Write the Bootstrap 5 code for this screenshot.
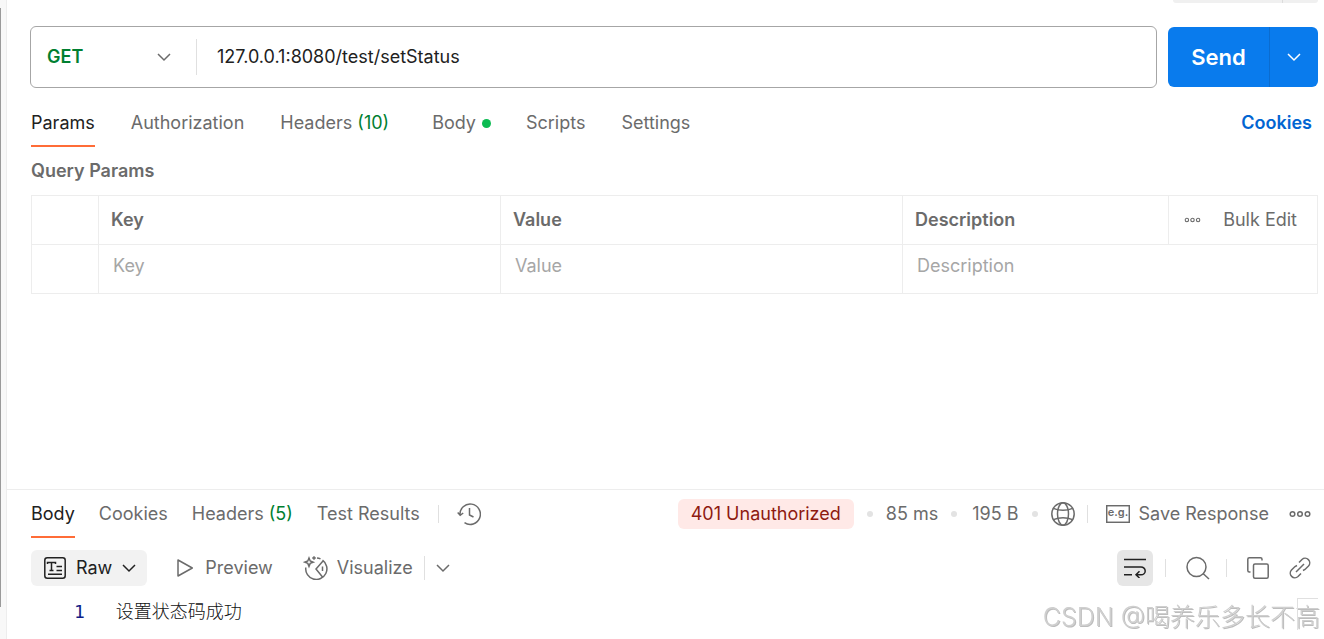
<!DOCTYPE html>
<html lang="en">
<head>
<meta charset="utf-8">
<meta name="viewport" content="width=device-width, initial-scale=1">
<title>127.0.0.1:8080/test/setStatus</title>
<link href="https://cdn.jsdelivr.net/npm/bootstrap@5.3.0/dist/css/bootstrap.min.css" rel="stylesheet">
<script src="https://cdn.jsdelivr.net/npm/bootstrap@5.3.0/dist/js/bootstrap.bundle.min.js" defer></script>
<style>
  :root { --ink: #212121; --muted: #6b6b6b; --faint: #a6a6a6; --line: #ededed; --green: #007f31; --accent: #ff6c37; }
  body { font-family: Inter, "Noto Sans CJK SC", sans-serif; font-size: 18px; line-height: 24px; color: var(--muted); background: #fff; }
  svg { display: block; flex: none; fill: none; stroke: currentColor; stroke-width: 1.5; }
  button { background: none; border: 0; padding: 0; color: inherit; }
  .rail { width: 7px; padding: 8px 0 32px; background: #f8f8f8; border-right: 1px solid var(--line); }
  .rail-mark { width: 1px; background: #9a9a9a; }
  .pane { min-width: 0; }
  .request { padding: 0 6px 0 24px; }
  .topstub { height: 3px; width: 145px; background: #f0f0f0; border-radius: 0 0 5px 5px; }
  .topstub span { width: 36px; border-left: 1px solid #dcdcdc; }
  .urlrow { gap: 11px; margin: 23px 0 0 -1px; }
  .urlbox { height: 62px; border: 1px solid #a6a6a6; border-radius: 6px; }
  .method { width: 166px; height: 36px; padding: 0 25px 0 16px; border-right: 1px solid #e0e0e0; }
  .method select { appearance: none; border: 0; background: none; padding: 0; outline: 0; color: var(--green); font-weight: 600; width: 100%; }
  .urlbox input { border: 0; outline: 0; padding: 0 20px; min-width: 0; color: var(--ink); }
  .send { height: 60px; background: #097bed; color: #fff; border-radius: 6px; }
  .send-main { width: 101px; font-size: 22px; font-weight: 600; }
  .send-more { width: 49px; border-left: 1px solid #0a6cd0; }
  .tabs a { color: inherit; text-decoration: none; border-bottom: 2px solid transparent; white-space: pre; }
  .tabs a.active { color: var(--ink); border-color: var(--accent); }
  .tabs-req { gap: 36px; margin-top: 23px; }
  .tabs-req a { padding-bottom: 10px; }
  .tabs-req .body-tab { margin-left: 7px; margin-right: -1px; }
  .tabs-res { gap: 24px; }
  .tabs-res a { padding: 12px 0 10px; }
  .count { color: var(--green); }
  .livedot { width: 9px; height: 9px; border-radius: 50%; background: #0cbb52; margin-left: 6px; }
  .cookielink { color: #0265d2; font-weight: 600; text-decoration: none; margin-right: 6px; }
  .heading { font-size: 18px; line-height: 24px; font-weight: 600; margin: 12px 0; }
  .params { table-layout: fixed; width: 100%; border-collapse: collapse; }
  .params .c-check { width: 67px; }
  .params .c-desc { width: 266px; }
  .params .c-tools { width: 149px; }
  .params th, .params td { border: 1px solid var(--line); height: 49px; padding: 0 12px; font-weight: 600; }
  .params td { padding: 0 14px 6px; }
  .params input { border: 0; outline: 0; padding: 0; width: 100%; display: block; }
  .params input::placeholder { color: var(--faint); opacity: 1; }
  .params .tools { padding: 0 20px 0 15px; font-weight: 400; }
  .response { border-top: 1px solid var(--line); height: 150px; }
  .resrow { padding: 0 13px 0 24px; height: 48px; }
  .toolrow { padding: 0 13px 0 24px; height: 36px; margin-top: 12px; }
  .vsep { width: 1px; height: 18px; background: #e0e0e0; }
  .tabs + .vsep { margin: 0 18px; }
  .status { height: 30px; padding: 0 13px; border-radius: 6px; background: #ffe9e7; color: #8e1a10; }
  .sepdot { width: 6px; height: 6px; border-radius: 50%; background: #e3e3e3; margin: 0 13px; }
  .sepdot.wide { margin: 0 15px 0 13px; }
  .save { gap: 9px; margin-left: 18px; }
  .rawbtn { height: 36px; padding: 0 11px 0 13px; gap: 10px; background: #f2f2f2; color: var(--ink); border-radius: 6px; }
  .previewbtn { gap: 12px; margin-left: 30px; }
  .visualbtn { gap: 9px; margin-left: 30px; }
  .visualbtn + .vsep { height: 24px; margin: 0 11px; }
  .wrapbtn { width: 36px; height: 36px; background: #e6e6e6; color: var(--ink); border-radius: 6px; }
  .codeline { padding: 14px 0 0 67px; gap: 31px; }
  .lineno { font-family: "DejaVu Sans Mono", monospace; color: #0f1d87; }
  .codetext { font-weight: 300; color: #111; }
  .watermark { right: 4px; bottom: 4px; font-size: 25px; line-height: 36px; font-weight: 300; color: #cfcfcf; text-shadow: 1px 1px 0 #bdbdbd; white-space: nowrap; pointer-events: none; }
  .watermark-corner { right: 6px; bottom: 9px; width: 21px; height: 32px; border: solid #e0e0e0; border-width: 1px 0 0 1px; pointer-events: none; }
</style>
</head>
<body>
<svg width="0" height="0" class="position-absolute" aria-hidden="true">
  <symbol id="chev" viewBox="0 0 14 14"><path d="M1 4l6 6 6-6"/></symbol>
  <symbol id="dots" viewBox="0 0 22 8"><circle cx="3.5" cy="4" r="2.3"/><circle cx="11" cy="4" r="2.3"/><circle cx="18.5" cy="4" r="2.3"/></symbol>
</svg>
<div class="d-flex vh-100 overflow-hidden">
  <div class="rail flex-shrink-0 d-flex"><div class="rail-mark"></div></div>
  <main class="pane flex-grow-1 d-flex flex-column">
    <section class="request flex-grow-1">
      <div class="topstub ms-auto d-flex justify-content-end"><span></span></div>
      <form class="urlrow d-flex align-items-center" onsubmit="return false">
        <div class="urlbox d-flex align-items-center flex-grow-1">
          <div class="method d-flex align-items-center">
            <select aria-label="Method"><option>GET</option><option>POST</option></select>
            <svg width="14" height="14"><use href="#chev"/></svg>
          </div>
          <input class="flex-grow-1" type="text" aria-label="Request URL" value="127.0.0.1:8080/test/setStatus">
        </div>
        <div class="send d-flex">
          <button type="submit" class="send-main">Send</button>
          <button type="button" class="send-more d-flex align-items-center justify-content-center" aria-label="Send options"><svg width="14" height="14"><use href="#chev"/></svg></button>
        </div>
      </form>
      <div class="d-flex justify-content-between">
        <nav class="tabs tabs-req d-flex" aria-label="Request">
          <a href="#" class="active">Params</a>
          <a href="#">Authorization</a>
          <a href="#">Headers <span class="count">(10)</span></a>
          <a href="#" class="body-tab d-flex align-items-center">Body<span class="livedot"></span></a>
          <a href="#">Scripts</a>
          <a href="#">Settings</a>
        </nav>
        <div class="tabs-req d-flex"><a href="#" class="cookielink">Cookies</a></div>
      </div>
      <h2 class="heading">Query Params</h2>
      <table class="params">
        <colgroup><col class="c-check"><col><col><col class="c-desc"><col class="c-tools"></colgroup>
        <thead>
          <tr>
            <th aria-label="Enabled"></th><th>Key</th><th>Value</th><th>Description</th>
            <th class="tools">
              <div class="d-flex align-items-center justify-content-between">
                <button type="button" aria-label="More"><svg width="17" height="6" viewBox="0 0 22 8"><use href="#dots"/></svg></button>
                <button type="button">Bulk Edit</button>
              </div>
            </th>
          </tr>
        </thead>
        <tbody>
          <tr>
            <td></td>
            <td><input type="text" placeholder="Key" aria-label="Key"></td>
            <td><input type="text" placeholder="Value" aria-label="Value"></td>
            <td colspan="2"><input type="text" placeholder="Description" aria-label="Description"></td>
          </tr>
        </tbody>
      </table>
    </section>

    <section class="response flex-shrink-0">
      <div class="resrow d-flex align-items-center justify-content-between">
        <div class="d-flex align-items-center">
          <nav class="tabs tabs-res d-flex" aria-label="Response">
            <a href="#" class="active">Body</a>
            <a href="#">Cookies</a>
            <a href="#">Headers <span class="count">(5)</span></a>
            <a href="#">Test Results</a>
          </nav>
          <span class="vsep"></span>
          <button type="button" aria-label="History">
            <svg width="24" height="24" viewBox="0 0 24 24"><path d="M3 13A10.2 10.2 0 1 1 7.5 20.7M.7 10.5L3.2 13.300l3-2.300M12.500 6v7l4 2"/></svg>
          </button>
        </div>
        <div class="d-flex align-items-center">
          <span class="status d-flex align-items-center">401 Unauthorized</span>
          <span class="sepdot"></span>
          <span>85 ms</span>
          <span class="sepdot wide"></span>
          <span>195 B</span>
          <span class="sepdot"></span>
          <button type="button" aria-label="Network" class="me-2"><svg width="24" height="24" viewBox="0 0 24 24"><circle cx="12" cy="12" r="11.200"/><ellipse cx="12" cy="12" rx="5.500" ry="11.200"/><path d="M2.500 6.300C8 9 16 9 21.500 6.300M2.500 17.700C8 15 16 15 21.500 17.700"/></svg></button>
          <span class="vsep ms-1"></span>
          <button type="button" class="save d-flex align-items-center">
            <svg width="24" height="18" viewBox="0 0 24 18"><rect x=".7" y=".7" width="22.600" height="16.600"/><text x="12" y="11" text-anchor="middle" font-size="11" font-weight="600" fill="currentColor" stroke="none">e.g.</text></svg>
            Save Response
          </button>
          <button type="button" aria-label="More actions" class="ps-3 ms-1"><svg width="22" height="8"><use href="#dots"/></svg></button>
        </div>
      </div>

      <div class="toolrow d-flex align-items-center justify-content-between">
        <div class="d-flex align-items-center">
          <button type="button" class="rawbtn d-flex align-items-center">
            <svg width="22" height="22" viewBox="0 0 22 22"><rect x=".8" y=".8" width="20.400" height="20.400" rx="2.500"/><path d="M3.500 7V5.500h8V7M7.500 5.500v8M5.500 13.500h4M12.500 9.500H18M12.500 13.500H18M4 17.200h14"/></svg>
            Raw
            <svg width="14" height="14"><use href="#chev"/></svg>
          </button>
          <button type="button" class="previewbtn d-flex align-items-center">
            <svg width="16" height="18" viewBox="0 0 16 18"><path d="M1 1l14.300 8L1 17z" stroke-linejoin="round"/></svg>
            Preview
          </button>
          <button type="button" class="visualbtn d-flex align-items-center">
            <svg width="25" height="24" viewBox="0 0 24 24"><path d="M13.500 1.900a10.600 10.600 0 0 1 3.500 1M19 4.200A10.600 10.600 0 1 1 2.300 11.500M5.500 2l1.200 3 3 1.200-3 1.200-1.200 3-1.200-3-3-1.200 3-1.200zM10.500.2v3.600M8.700 2h3.600M19.500 5L12.500 13l6.500 8M19 10.500v4.500"/></svg>
            Visualize
          </button>
          <span class="vsep"></span>
          <button type="button" aria-label="Visualize options"><svg width="14" height="14"><use href="#chev"/></svg></button>
        </div>
        <div class="d-flex align-items-center">
          <button type="button" class="wrapbtn d-flex align-items-center justify-content-center me-2" aria-label="Wrap lines">
            <svg width="22" height="20" viewBox="0 0 22 20"><path d="M0 1.500h22M0 9h17a4.200 3.900 0 0 1 0 7.800h-5M0 16.800h8M15.500 13.300L12 16.800l3.500 3.200"/></svg>
          </button>
          <span class="vsep ms-1 me-3"></span>
          <button type="button" aria-label="Search" class="ps-1 pe-3"><svg width="24" height="24" viewBox="0 0 24 24"><circle cx="10.500" cy="11" r="9.500"/><path d="M17 17.500l6 5.500"/></svg></button>
          <span class="vsep me-3"></span>
          <button type="button" aria-label="Copy" class="ps-1 pe-1"><svg width="22" height="22" viewBox="0 0 22 22"><rect x="6.500" y="7" width="14.700" height="14.200" rx="1.500"/><path d="M3.500 15H2.300Q.8 15 .8 13.500V2.300Q.8.8 2.300.8H13.500Q15 .8 15 2.300V3.500"/></svg></button>
          <button type="button" aria-label="Copy link" class="ms-3"><svg width="22" height="22" viewBox="0 0 22 22"><path d="M7 15l8-8M10 5.500l3-3a4.600 4.600 0 0 1 6.500 6.500l-3.500 3.500-2 1M12 16.500l-3 3A4.600 4.600 0 0 1 2.500 13L6 9.500l2-1"/></svg></button>
        </div>
      </div>

      <div class="codeline d-flex">
        <span class="lineno">1</span><span class="codetext" lang="zh-CN">设置状态码成功</span>
      </div>
    </section>
  </main>
</div>
<div class="watermark position-fixed" lang="zh-CN">CSDN @喝养乐多长不高</div>
<div class="watermark-corner position-fixed"></div>
</body>
</html>
